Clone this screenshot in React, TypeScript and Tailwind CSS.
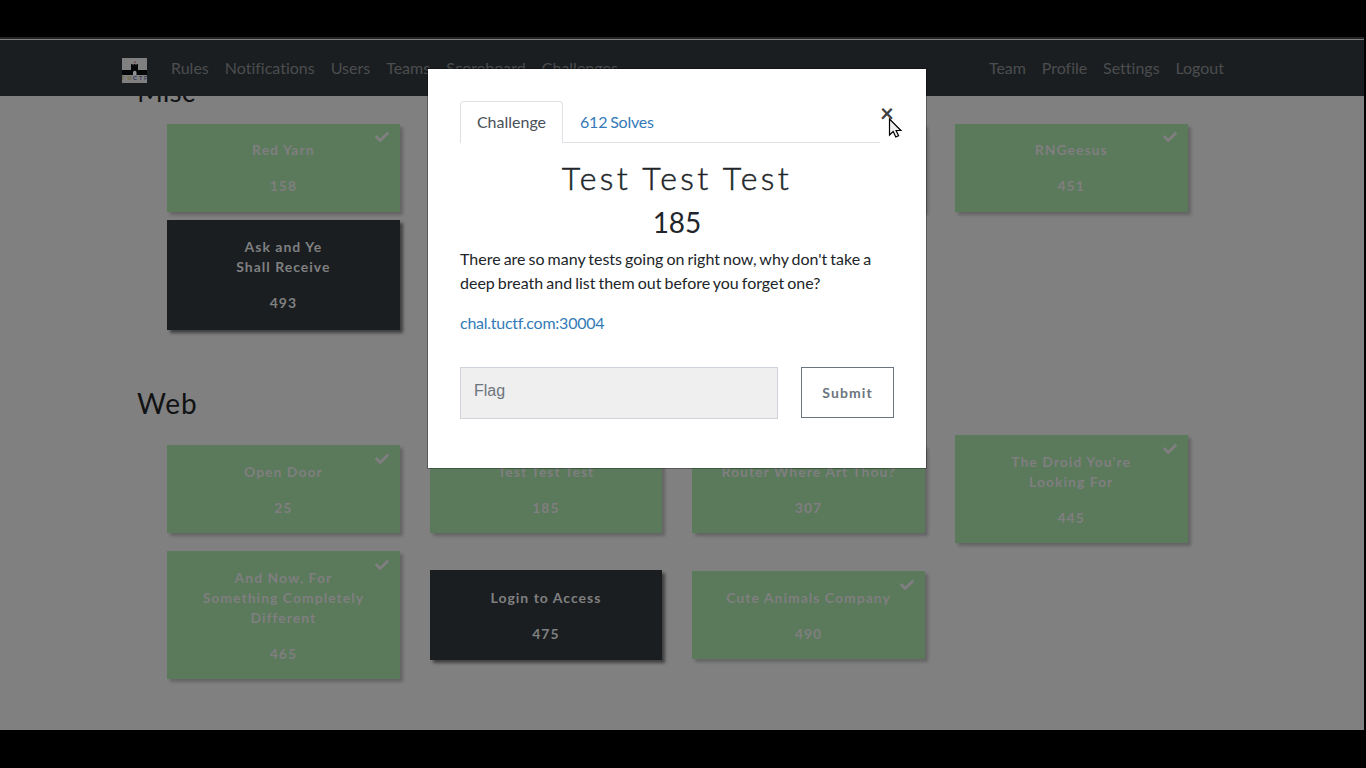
import React from "react";
import { FaCheck } from "react-icons/fa";

type Challenge = { lines: string[]; points: number; solved: boolean };

const leftLinks = ["Rules", "Notifications", "Users", "Teams", "Scoreboard", "Challenges"];
const rightLinks = ["Team", "Profile", "Settings", "Logout"];

const miscTop: Challenge[] = [
  { lines: ["Red Yarn"], points: 158, solved: true },
  { lines: ["Onions"], points: 178, solved: true },
  { lines: ["Super Secret"], points: 426, solved: true },
  { lines: ["RNGeesus"], points: 451, solved: true },
];
const miscBottom: Challenge[] = [{ lines: ["Ask and Ye", "Shall Receive"], points: 493, solved: false }];
const webTop: Challenge[] = [
  { lines: ["Open Door"], points: 25, solved: true },
  { lines: ["Test Test Test"], points: 185, solved: true },
  { lines: ["Router Where Art Thou?"], points: 307, solved: true },
  { lines: ["The Droid You're", "Looking For"], points: 445, solved: true },
];
const webBottom: Challenge[] = [
  { lines: ["And Now, For", "Something Completely", "Different"], points: 465, solved: true },
  { lines: ["Login to Access"], points: 475, solved: false },
  { lines: ["Cute Animals Company"], points: 490, solved: true },
];

function Card({ item, low }: { item: Challenge; low: boolean }) {
  const tone = item.solved
    ? "bg-[#5a7a5b] text-[#807e80] shadow-[3px_3px_3px_rgba(0,0,0,0.22)]"
    : "border border-[#1a1e21] bg-[#1a1e21] text-[#808080] shadow-[3px_3px_3px_rgba(0,0,0,0.5)]";
  const padding = low ? "pt-[17px] pb-[15px]" : "py-4";
  return (
    <button className={`relative w-full text-center text-sm leading-5 font-bold tracking-[1px] ${padding} ${tone}`}>
      {item.lines.map((line) => (
        <span key={line} className="block">
          {line}
        </span>
      ))}
      <span className="mt-4 block">{item.points}</span>
      {item.solved && (
        <FaCheck className={`absolute right-[11px] size-[14px] ${low ? "top-[7px]" : "top-[6px]"}`} />
      )}
    </button>
  );
}

function CardRow({ items, low = false }: { items: Challenge[]; low?: boolean }) {
  return (
    <div className="ml-[167px] grid w-[1020.5px] grid-cols-4 items-center gap-x-[29.9px]">
      {items.map((item) => (
        <Card key={item.points} item={item} low={low} />
      ))}
    </div>
  );
}

function Logo() {
  return (
    <svg className="mt-1 size-[25px]" viewBox="0 0 25 25">
      <rect width="25" height="25" fill="#808080" />
      <path d="M0 12h9V6h1.500v1h1V6h2v1h1V6H16v6h9v5H0z" fill="#050607" />
      <path d="M11 17v-2.500a1.750 1.750 0 0 1 3.500 0V17z" fill="#929292" />
      <rect x="12" y="3.500" width="2" height="1.500" fill="#7b4a55" />
      <g fontFamily="Liberation Sans, sans-serif" fontSize="5.500" fontWeight="700">
        <text x="-1" y="22" fill="#686543">T</text>
        <text x="5.500" y="22" fill="#6f6930">U</text>
        <text x="11" y="22" fill="#30325f">C</text>
        <text x="17" y="22" fill="#3d3e59">T</text>
        <text x="22" y="22" fill="#3d3e59">F</text>
      </g>
    </svg>
  );
}

function Modal() {
  return (
    <div className="absolute top-[68px] left-[427px] h-[401px] w-[500px] border border-black/30 bg-white bg-clip-padding px-8 pt-8 text-[#212529]">
      <div className="flex h-[42px] w-[420px] border-b border-[#dee2e6] text-base leading-6">
        <div className="h-[42px] w-[103px] rounded-t border border-b-0 border-[#dee2e6] bg-white pt-2 text-center text-[#495057]">
          Challenge
        </div>
        <div className="pt-[9px] pl-[17px] tracking-[-0.2px] text-[#337ab7] [word-spacing:-1px]">612 Solves</div>
      </div>
      <button className="absolute top-[32px] left-[452px] text-2xl leading-6 font-bold text-[#404040]">×</button>
      <h3 className="mt-4 text-center text-[32px] leading-[38px] font-light tracking-[3.4px] [-webkit-text-stroke:0.5px_#212529]">
        Test Test Test
      </h3>
      <h4 className="mt-[6px] text-center text-[28px] leading-[38px]">185</h4>
      <p className="mt-[6px] text-base leading-6 [word-spacing:-1.08px]">
        There are so many tests going on right now, why don't take a
        <br />
        deep breath and list them out before you forget one?
      </p>
      <p className="mt-4 text-base leading-6 tracking-[-0.25px] text-[#337ab7]">chal.tuctf.com:30004</p>
      <div className="mt-8 flex">
        <input
          placeholder="Flag"
          className="h-[52px] w-[318px] border border-[#ced4da] bg-[#efefef] px-[13px] pb-[5px] font-['Liberation_Sans',sans-serif] text-base placeholder:text-[#6c757d]"
        />
        <button className="ml-[23px] h-[51px] w-[93px] border border-[#6c757d] text-sm font-bold tracking-[1.1px] text-[#6c757d]">
          Submit
        </button>
      </div>
    </div>
  );
}

function Cursor() {
  return (
    <svg className="absolute top-[117px] left-[888px]" width="15" height="22" viewBox="0 0 15 22">
      <path
        d="M1.500 2v16l3.700-3.500 2.600 5.500 2.800-1.300-2.500-5.200h4.800z"
        fill="#efefef"
        stroke="#000"
        strokeWidth="1.200"
      />
    </svg>
  );
}

export default function App() {
  return (
    <div className="relative flex h-[768px] w-[1366px] flex-col overflow-hidden bg-black pt-[37px] font-[Lato,sans-serif] [font-variant-ligatures:none]">
      <div className="h-[2px] w-[1364px] bg-[#262626]" />
      <div className="h-px w-[1364px] bg-[#808080]" />
      <nav className="flex h-14 w-[1364px] shrink-0 items-center bg-[#1a1e21] pr-[140px] pl-[122px] text-base leading-6 text-[#4c4d4e]">
        <Logo />
        <div className="ml-6 flex gap-4">
          {leftLinks.map((label) => (
            <a key={label}>{label}</a>
          ))}
        </div>
        <div className="ml-auto flex gap-[15.8px]">
          {rightLinks.map((label) => (
            <a key={label}>{label}</a>
          ))}
        </div>
      </nav>
      <main className="h-[634px] w-[1364px] overflow-hidden bg-[#808080]">
        <h3 className="-mt-[22px] ml-[137px] text-[28px] leading-[34px] text-[#101214]">Misc</h3>
        <div className="mt-4">
          <CardRow items={miscTop} />
        </div>
        <div className="mt-2">
          <CardRow items={miscBottom} />
        </div>
        <h3 className="mt-[56px] ml-[137px] text-[28px] leading-[34px] tracking-[0.9px] text-[#101214]">Web</h3>
        <div className="mt-[15px]">
          <CardRow items={webTop} low />
        </div>
        <div className="mt-2">
          <CardRow items={webBottom} low />
        </div>
      </main>
      <Modal />
      <Cursor />
    </div>
  );
}
